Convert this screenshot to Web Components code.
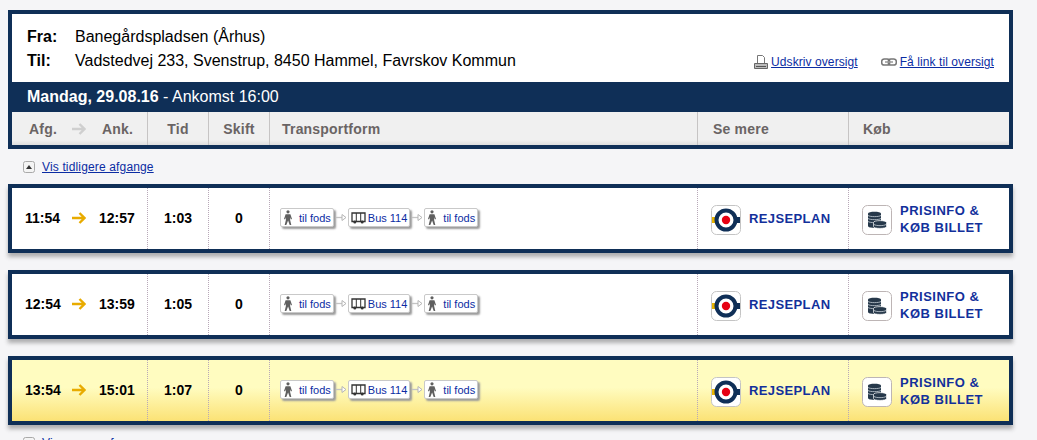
<!DOCTYPE html>
<html lang="da">
<head>
<meta charset="utf-8">
<title>Rejseplan</title>
<style>
  html, body { margin: 0; height: 440px; overflow: hidden; }
  body {
    background: #f5f5f7;
    font-family: "Liberation Sans", Arial, sans-serif;
    color: #000;
  }
  .page { width: 1005px; padding: 10px 0 0 8px; }
</style>
</head>
<body>
<div class="page">
  <trip-summary from="Banegårdspladsen (Århus)" to="Vadstedvej 233, Svenstrup, 8450 Hammel, Favrskov Kommun" day="Mandag, 29.08.16" arrival="- Ankomst 16:00"></trip-summary>
  <more-link dir="up">Vis tidligere afgange</more-link>
  <trip-row dep="11:54" arr="12:57" dur="1:03" changes="0"></trip-row>
  <trip-row dep="12:54" arr="13:59" dur="1:05" changes="0"></trip-row>
  <trip-row dep="13:54" arr="15:01" dur="1:07" changes="0" highlight></trip-row>
  <more-link dir="down">Vis senere afgange</more-link>
</div>

<script>
const COLS = '135px 61px 61px 428px 151px 1fr';

const ARROW = color => `
  <svg width="14" height="12" viewBox="0 0 14 12" aria-hidden="true">
    <path d="M0 6H12M7.500 1L12.500 6L7.500 11" fill="none" stroke="${color}" stroke-width="2.4"/>
  </svg>`;

class MoreLink extends HTMLElement {
  constructor() {
    super();
    this.attachShadow({ mode: 'open' });
  }

  connectedCallback() {
    const points = this.getAttribute('dir') === 'down' ? '3,4 9,4 6,8' : '3,8 9,8 6,4';
    this.shadowRoot.innerHTML = `
      <style>
        :host { display: flex; align-items: center; gap: 7px; height: 35px; padding-left: 15px; box-sizing: border-box; }
        .box { width: 12px; height: 12px; }
        a { font-size: 12px; letter-spacing: .15px; color: #0b2ca3; text-decoration: underline; }
      </style>
      <svg class="box" viewBox="0 0 12 12" aria-hidden="true">
        <rect x=".5" y=".5" width="11" height="11" rx="2" fill="#f4f4f4" stroke="#a9a9a9"/>
        <polygon points="${points}" fill="#333"/>
      </svg>
      <a href="#"><slot></slot></a>`;
  }
}

class TripSummary extends HTMLElement {
  constructor() {
    super();
    this.attachShadow({ mode: 'open' });
  }

  connectedCallback() {
    this.shadowRoot.innerHTML = `
      <style>
        :host { display: block; border: 4px solid #0f2f57; background: #0f2f57; }
        .top {
          height: 68px; box-sizing: border-box; background: #fff;
          display: flex; justify-content: space-between; align-items: flex-end;
          padding: 11px 15px 13px 15px;
        }
        .places { display: grid; grid-template-columns: 48px auto; grid-auto-rows: 24px; align-items: center; font-size: 16px; align-self: flex-start; }
        .places b { font-weight: bold; }
        .links { display: flex; gap: 23px; font-size: 12px; letter-spacing: .08px; }
        .links span { display: flex; align-items: center; gap: 3px; }
        a { color: #0b2ca3; text-decoration: underline; }
        .day { height: 30px; display: flex; align-items: center; padding-left: 15px; color: #fff; font-size: 16px; white-space: pre; }
        .head {
          height: 33px; display: grid; grid-template-columns: ${COLS};
          background: linear-gradient(#f0f0f0 85%, #dedede);
          font-size: 14px; font-weight: bold; color: #6a6464; letter-spacing: .2px;
        }
        .head > div { display: flex; align-items: center; border-left: 1px solid #c6c4c4; box-sizing: border-box; }
        .head > div:first-child { border-left: 0; padding-left: 17px; }
        .head .c { justify-content: center; }
        .head .p { padding-left: 12px; }
        .head .s { padding-left: 15px; }
        .head .k { padding-left: 14px; }
        .afg { width: 43px; }
        .ank { margin-left: 16px; }
      </style>
      <div class="top">
        <div class="places">
          <b>Fra:</b><span>${this.getAttribute('from')}</span>
          <b>Til:</b><span>${this.getAttribute('to')}</span>
        </div>
        <div class="links">
          <span>
            <svg width="14" height="14" viewBox="0 0 14 14" aria-hidden="true">
              <path d="M3.500 8V.5H8.500L10.500 2.500V8" fill="#fff" stroke="#777"/>
              <path d="M.5 8.500H13.500V13.500H.5Z" fill="#bbb" stroke="#666"/>
              <path d="M2 11.500H12" stroke="#555"/>
            </svg>
            <a href="#">Udskriv oversigt</a>
          </span>
          <span>
            <svg width="16" height="8" viewBox="0 0 16 8" aria-hidden="true">
              <rect x=".7" y="1" width="8" height="6" rx="2.600" fill="none" stroke="#777" stroke-width="1.5"/>
              <rect x="7.300" y="1" width="8" height="6" rx="2.600" fill="none" stroke="#777" stroke-width="1.5"/>
              <path d="M4 4H12" stroke="#999" stroke-width="1.5"/>
            </svg>
            <a href="#">Få link til oversigt</a>
          </span>
        </div>
      </div>
      <div class="day"><b>${this.getAttribute('day')}</b> ${this.getAttribute('arrival')}</div>
      <div class="head">
        <div><span class="afg">Afg.</span>${ARROW('#cfcfcf')}<span class="ank">Ank.</span></div>
        <div class="c">Tid</div>
        <div class="c">Skift</div>
        <div class="p">Transportform</div>
        <div class="s">Se mere</div>
        <div class="k">Køb</div>
      </div>`;
  }
}

class TripLeg extends HTMLElement {
  constructor() {
    super();
    this.attachShadow({ mode: 'open' });
  }

  connectedCallback() {
    const walk = `
      <svg width="14" height="15" viewBox="0 0 14 15" aria-hidden="true">
        <circle cx="7" cy="1.800" r="1.600" fill="#5f5f5f"/>
        <path d="M4.600 4.200H9.400L11 9L9.800 9.400L9 7.200V9.400L10.300 15H8.700L7.100 10.600L5.300 15H3.700L5 9.400V7.200L4.200 9.400L3 9Z" fill="#5f5f5f"/>
      </svg>`;
    const bus = `
      <svg width="15" height="12" viewBox="0 0 15 12" aria-hidden="true">
        <path d="M1 1H14V9.500H1Z" fill="#fff" stroke="#333" stroke-width="1.300"/>
        <path d="M5.300 1V9M9.700 1V9" stroke="#333"/>
        <circle cx="3.800" cy="10" r="1.500" fill="#333"/>
        <circle cx="11.200" cy="10" r="1.500" fill="#333"/>
      </svg>`;
    const isBus = this.getAttribute('type') === 'bus';
    this.shadowRoot.innerHTML = `
      <style>
        :host {
          display: flex; align-items: center; gap: ${isBus ? '2px' : '4px'}; height: 19px; box-sizing: border-box;
          padding: ${isBus ? '0 2px' : '0 2px 0 0'}; background: #fff; border: 1px solid #c9c9c9; border-radius: 2px;
          box-shadow: 2px 2px 2px #9b9b9b; font-size: 11px; color: #0b2ca3; white-space: nowrap;
        }
      </style>
      ${isBus ? bus : walk}
      <slot></slot>`;
  }
}

class TripRow extends HTMLElement {
  constructor() {
    super();
    this.attachShadow({ mode: 'open' });
  }

  connectedCallback() {
    const legJoin = `
      <svg class="join" width="11" height="9" viewBox="0 0 11 9" aria-hidden="true">
        <path d="M0 4.500H6" stroke="#c4c4c4" stroke-width="1.300"/>
        <path d="M6 1.500V7.500L10 4.500Z" fill="#fff" stroke="#b5b5b5"/>
      </svg>`;
    this.shadowRoot.innerHTML = `
      <style>
        :host {
          display: grid; grid-template-columns: ${COLS}; height: 69px; box-sizing: border-box;
          border: 4px solid #0f2f57; margin-bottom: 17px; background: #fff;
          box-shadow: 0 4px 4px rgba(70, 70, 70, .4);
          font-size: 14px; font-weight: bold;
        }
        :host([highlight]) { background: linear-gradient(#fffcc0 45%, #fbe275); }
        :host(:last-of-type) { margin-bottom: 0; }
        .cell { display: flex; align-items: center; border-left: 1px dotted #b8a8b8; box-sizing: border-box; padding-bottom: 2px; }
        .cell.first { border-left: 0; padding-left: 13px; }
        .c { justify-content: center; }
        .time { width: 47px; }
        .arr { margin-left: 13px; }
        .legs { padding-left: 10px; font-weight: normal; gap: 1px; }
        .join { margin-left: 1px; }
        .link { padding-left: 13px; padding-bottom: 0; gap: 8px; color: #12309b; font-size: 13px; letter-spacing: .38px; line-height: 17px; }
        .buy { letter-spacing: .5px; }
        .tile { flex: none; width: 30px; height: 30px; margin-top: 2px; }
      </style>
      <div class="cell first"><span class="time">${this.getAttribute('dep')}</span>${ARROW('#e8ab00')}<span class="arr">${this.getAttribute('arr')}</span></div>
      <div class="cell c">${this.getAttribute('dur')}</div>
      <div class="cell c">${this.getAttribute('changes')}</div>
      <div class="cell legs">
        <trip-leg type="walk">til fods</trip-leg>${legJoin}
        <trip-leg type="bus">Bus 114</trip-leg>${legJoin}
        <trip-leg type="walk">til fods</trip-leg>
      </div>
      <div class="cell link">
        <svg class="tile" viewBox="0 0 30 30" aria-hidden="true">
          <rect x=".5" y=".5" width="29" height="29" rx="5" fill="#fff" stroke="#c4c4c4"/>
          <rect x="1" y="12" width="6" height="6" fill="#e8b400"/>
          <rect x="23" y="12" width="6" height="6" fill="#0f2f57"/>
          <circle cx="15" cy="15" r="9.500" fill="#fff" stroke="#0f2f57" stroke-width="4"/>
          <circle cx="15" cy="15" r="4.200" fill="#e60012"/>
        </svg>
        <span>REJSEPLAN</span>
      </div>
      <div class="cell link">
        <svg class="tile" viewBox="0 0 30 30" aria-hidden="true">
          <rect x=".5" y=".5" width="29" height="29" rx="5" fill="#fff" stroke="#bdb5b5"/>
          <path d="M6 8.500C6 6 19 6 19 8.500V21C19 23.500 6 23.500 6 21Z" fill="#26384a"/>
          <path d="M6 10.500C8 12 17 12 19 10.500M6 13.500C8 15 17 15 19 13.500M6 16.500C8 18 17 18 19 16.500" fill="none" stroke="#c8d0d8" stroke-width=".8"/>
          <path d="M11.500 17.500C11.500 15 24.500 15 24.500 17.500V21.500C24.500 24 11.500 24 11.500 21.500Z" fill="#26384a" stroke="#fff" stroke-width=".7"/>
          <path d="M12 19.500C14 21 22 21 24 19.500" fill="none" stroke="#c8d0d8" stroke-width=".8"/>
        </svg>
        <span class="buy">PRISINFO &amp;<br>KØB BILLET</span>
      </div>`;
  }
}

customElements.define('more-link', MoreLink);
customElements.define('trip-summary', TripSummary);
customElements.define('trip-leg', TripLeg);
customElements.define('trip-row', TripRow);
</script>
</body>
</html>
